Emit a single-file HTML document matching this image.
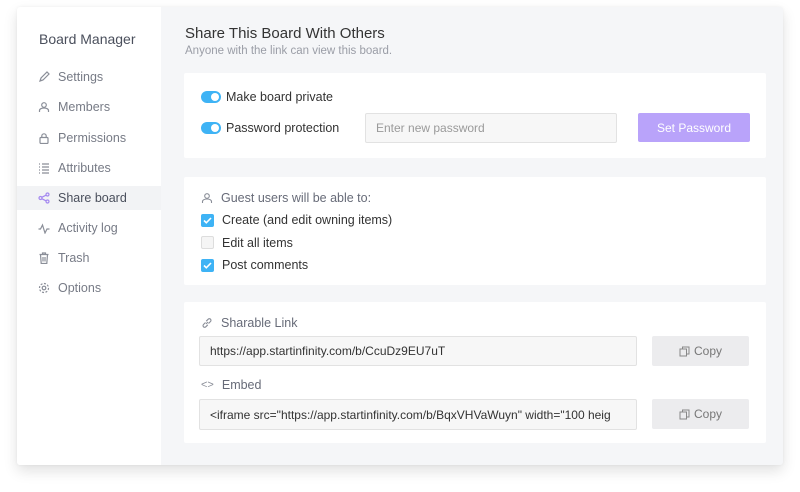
<!DOCTYPE html>
<html><head><style>
*{box-sizing:border-box;margin:0;padding:0}
body{width:800px;height:492px;background:#fff;font-family:"Liberation Sans",sans-serif;position:relative;overflow:hidden}
.win{position:absolute;left:17px;top:7px;width:766px;height:458px;background:#f5f6f8;box-shadow:0 6px 14px rgba(0,0,0,.12),0 0 3px rgba(0,0,0,.05);border-radius:3px;overflow:hidden}
.side{position:absolute;left:0;top:0;width:144px;height:458px;background:#fff}
.side h1{position:absolute;left:22px;top:24px;font-size:14px;font-weight:normal;color:#4a4f5c}
.item{position:absolute;left:0;width:144px;height:24px;display:flex;align-items:center;padding-left:21px;font-size:12.5px;color:#777b86}
.item svg{width:12px;height:12px;margin-right:8px;stroke:#8a8e98;fill:none;stroke-width:1.2}
.item.act{background:#f2f3f5;color:#4a4f5c}
.item.act svg{stroke:#a488f0}
.abs{position:absolute}
.t{font-size:15px;color:#333;left:168px;top:18px}
.st{font-size:11.5px;color:#9a9da6;left:168px;top:38px}
.card{position:absolute;left:167px;width:582px;background:#fff;border-radius:2px}
.tog{position:absolute;width:20px;height:12px;border-radius:6px;background:#3eb3f5}
.tog:after{content:"";position:absolute;right:2px;top:2px;width:8px;height:8px;border-radius:50%;background:#fff}
.lbl{position:absolute;font-size:12.5px;color:#333}
.inp{position:absolute;background:#f7f7f7;border:1px solid #e2e2e2;border-radius:2px;font-size:12px;color:#333;padding-left:10px;display:flex;align-items:center;white-space:nowrap;overflow:hidden}
.cb{position:absolute;width:13px;height:13px;border-radius:2px;background:#3eb3f5}
.cb svg{position:absolute;left:2px;top:2px}
.cb.off{background:#f5f5f5;border:1px solid #ddd}
.btn{position:absolute;background:#ececee;border-radius:2px;font-size:12px;color:#777;display:flex;align-items:center;justify-content:center}
.sec{position:absolute;font-size:12.5px;color:#676b78;display:flex;align-items:center}
.sec svg{margin-right:8px;stroke:#8a8e98;fill:none;stroke-width:1.1}
</style></head><body>
<div class="win">
<div class="side">
<h1>Board Manager</h1>
<div class="item" style="top:58px"><svg viewBox="0 0 12 12"><path d="M2 10l1-3 6-6 2 2-6 6z"/></svg>Settings</div>
<div class="item" style="top:88px"><svg viewBox="0 0 12 12"><circle cx="6" cy="4" r="2.3"/><path d="M1.5 11v-1.5c0-1.5 2-2.5 4.5-2.5s4.5 1 4.5 2.5V11"/></svg>Members</div>
<div class="item" style="top:119px"><svg viewBox="0 0 12 12"><rect x="2" y="5.5" width="8" height="6" rx="1"/><path d="M3.8 5.5V4a2.2 2.2 0 014.4 0v1.5"/></svg>Permissions</div>
<div class="item" style="top:149px"><svg viewBox="0 0 12 12"><path d="M1 2h1M4 2h7M1 5h1M4 5h7M1 8h1M4 8h7M1 11h1M4 11h7"/></svg>Attributes</div>
<div class="item act" style="top:179px"><svg viewBox="0 0 12 12"><circle cx="2.5" cy="6" r="1.5"/><circle cx="9.5" cy="2.5" r="1.5"/><circle cx="9.5" cy="9.5" r="1.5"/><path d="M4 5.2l4-2M4 6.8l4 2"/></svg>Share board</div>
<div class="item" style="top:209px"><svg viewBox="0 0 12 12"><path d="M0.5 7h2l2-4 2.5 8 2-4h2.5"/></svg>Activity log</div>
<div class="item" style="top:239px"><svg viewBox="0 0 12 12"><path d="M1.5 2.5h9M4.5 2.5V1h3v1.5M2.5 2.5l.7 9h5.6l.7-9M5 5v4.5M7 5v4.5"/></svg>Trash</div>
<div class="item" style="top:269px"><svg viewBox="0 0 12 12"><circle cx="6" cy="6" r="1.8"/><circle cx="6" cy="6" r="4.5" stroke-dasharray="2 1.5"/></svg>Options</div>
</div>
<div class="abs t">Share This Board With Others</div>
<div class="abs st">Anyone with the link can view this board.</div>

<div class="card" style="top:66px;height:85px">
<div class="tog" style="left:17px;top:18px"></div><div class="lbl" style="left:42px;top:17px">Make board private</div>
<div class="tog" style="left:17px;top:49px"></div><div class="lbl" style="left:42px;top:48px">Password protection</div>
<div class="inp" style="left:181px;top:40px;width:252px;height:30px;color:#9a9a9a">Enter new password</div>
<div class="btn" style="left:454px;top:40px;width:112px;height:29px;background:#b9a3fa;color:#fff">Set Password</div>
</div>

<div class="card" style="top:170px;height:108px">
<div class="sec" style="left:17px;top:14px"><svg width="12" height="12" viewBox="0 0 12 12"><circle cx="6" cy="4" r="2.3"/><path d="M1.5 11v-1.5c0-1.5 2-2.5 4.5-2.5s4.5 1 4.5 2.5V11"/></svg>Guest users will be able to:</div>
<div class="cb" style="left:17px;top:37px"><svg width="9" height="9" viewBox="0 0 9 9"><path d="M1 4.5l2.3 2.3L8 2" stroke="#fff" stroke-width="1.6" fill="none"/></svg></div><div class="lbl" style="left:38px;top:36px">Create (and edit owning items)</div>
<div class="cb off" style="left:17px;top:59px"></div><div class="lbl" style="left:38px;top:59px">Edit all items</div>
<div class="cb" style="left:17px;top:82px"><svg width="9" height="9" viewBox="0 0 9 9"><path d="M1 4.5l2.3 2.3L8 2" stroke="#fff" stroke-width="1.6" fill="none"/></svg></div><div class="lbl" style="left:38px;top:81px">Post comments</div>
</div>

<div class="card" style="top:295px;height:141px">
<div class="sec" style="left:17px;top:14px"><svg width="12" height="12" viewBox="0 0 12 12"><path d="M5 7l2-2M4.5 5.5l-2 2a1.6 1.6 0 002.3 2.3l2-2M7.5 6.5l2-2a1.6 1.6 0 00-2.3-2.3l-2 2"/></svg>Sharable Link</div>
<div class="inp" style="left:15px;top:34px;width:438px;height:30px">https://app.startinfinity.com/b/CcuDz9EU7uT</div>
<div class="btn" style="left:468px;top:34px;width:97px;height:30px"><svg width="11" height="11" viewBox="0 0 11 11" style="margin-right:4px" fill="none" stroke="#888"><rect x="1" y="3" width="6.5" height="7"/><path d="M3.5 3V1h6.5v7H7.5"/></svg>Copy</div>
<div class="sec" style="left:17px;top:76px"><span style="margin-right:8px;color:#8a8e98;font-size:11px">&lt;&gt;</span>Embed</div>
<div class="inp" style="left:15px;top:97px;width:438px;height:31px">&lt;iframe src="https://app.startinfinity.com/b/BqxVHVaWuyn" width="100 heig</div>
<div class="btn" style="left:468px;top:97px;width:97px;height:30px"><svg width="11" height="11" viewBox="0 0 11 11" style="margin-right:4px" fill="none" stroke="#888"><rect x="1" y="3" width="6.5" height="7"/><path d="M3.5 3V1h6.5v7H7.5"/></svg>Copy</div>
</div>
</div>
</body></html>
